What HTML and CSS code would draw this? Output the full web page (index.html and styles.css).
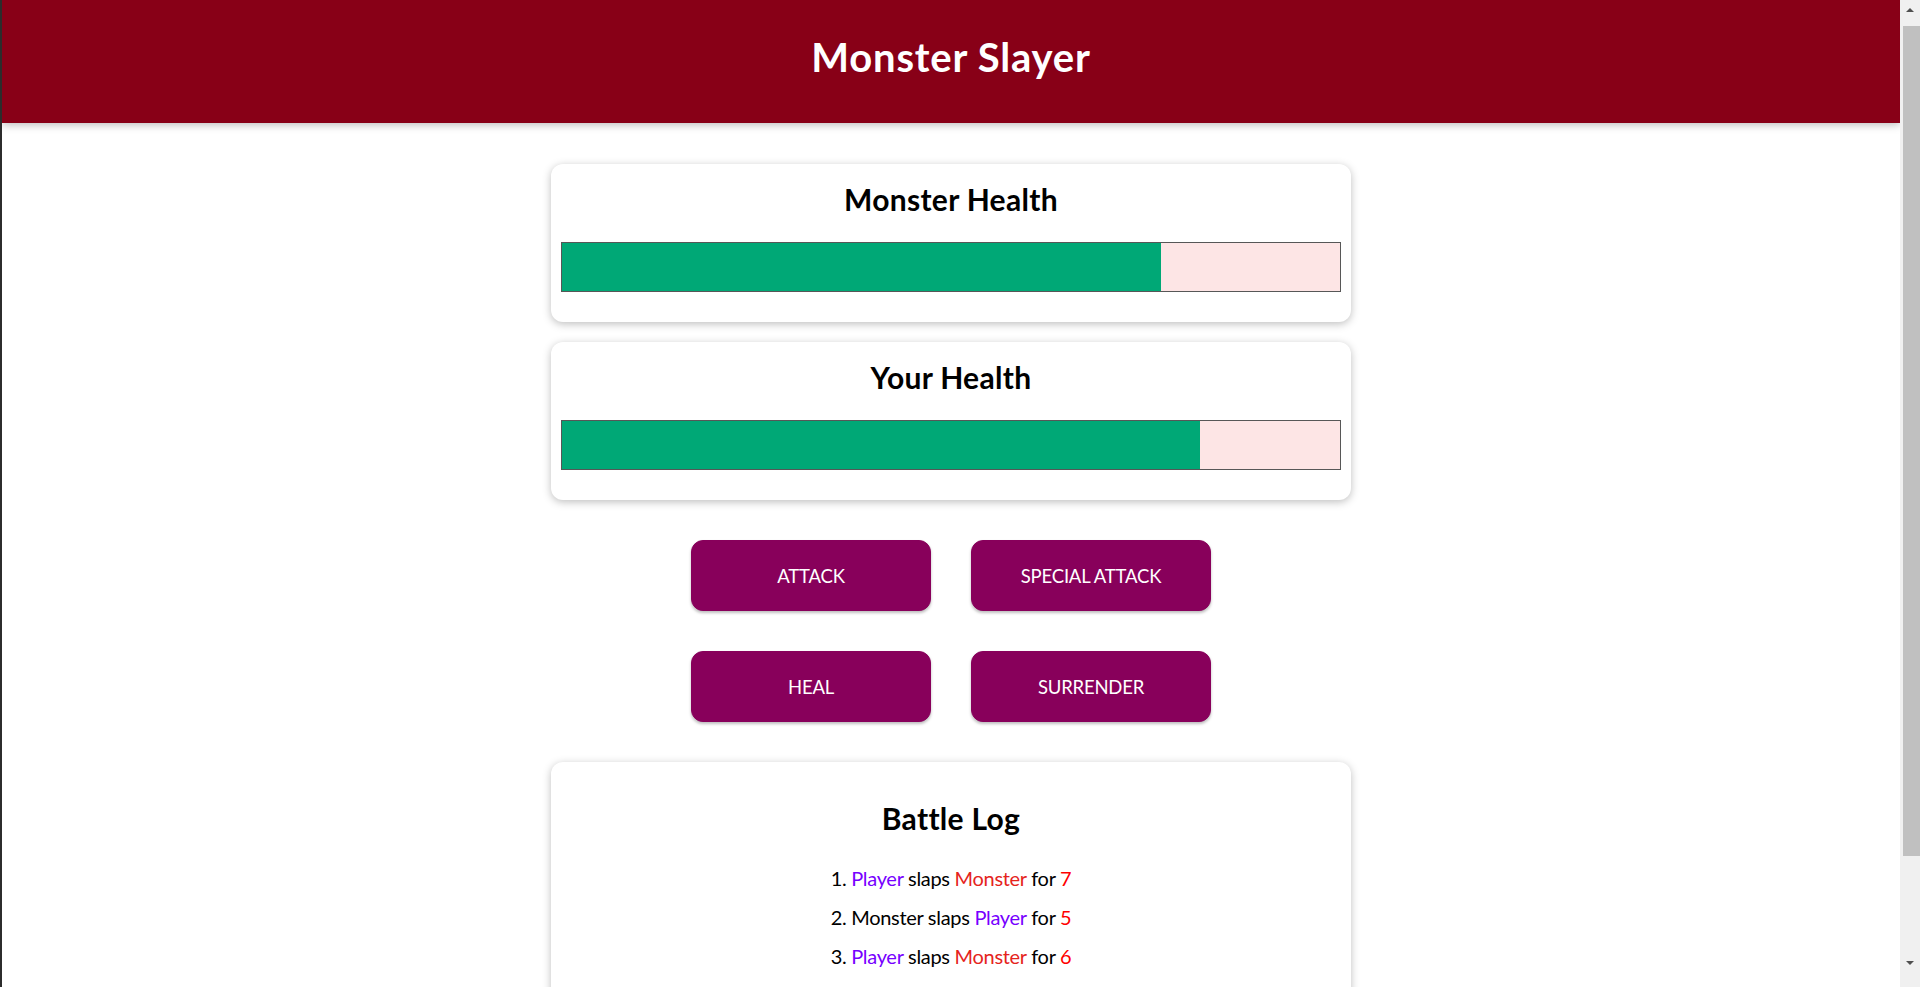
FILE: index.html
```html
<!DOCTYPE html>
<html lang="en">
<head>
<meta charset="utf-8">
<title>Monster Slayer</title>
<link rel="stylesheet" href="styles.css">
</head>
<body>
<header class="app-header">
  <h1 class="app-title">Monster Slayer</h1>
</header>
<main class="game">
  <section class="card health-card">
    <h2 class="card-title">Monster Health</h2>
    <div class="healthbar"><div class="healthbar-value" style="width: 77%"></div></div>
  </section>
  <section class="card health-card">
    <h2 class="card-title">Your Health</h2>
    <div class="healthbar"><div class="healthbar-value" style="width: 82%"></div></div>
  </section>
  <section class="controls">
    <button class="action">ATTACK</button>
    <button class="action">SPECIAL ATTACK</button>
    <button class="action">HEAL</button>
    <button class="action">SURRENDER</button>
  </section>
  <section class="card log-card">
    <h2 class="card-title">Battle Log</h2>
    <ol class="log-list">
      <li><span class="who-player">Player</span> slaps <span class="who-monster">Monster</span> for <span class="dmg">7</span></li>
      <li>Monster slaps <span class="who-player">Player</span> for <span class="dmg">5</span></li>
      <li><span class="who-player">Player</span> slaps <span class="who-monster">Monster</span> for <span class="dmg">6</span></li>
      <li>Monster slaps <span class="who-player">Player</span> for <span class="dmg">7</span></li>
      <li><span class="who-player">Player</span> slaps <span class="who-monster">Monster</span> for <span class="dmg">10</span></li>
      <li>Monster slaps <span class="who-player">Player</span> for <span class="dmg">6</span></li>
    </ol>
  </section>
</main>
<div class="fake-scrollbar" aria-hidden="true">
  <span class="sb-arrow sb-up"></span>
  <span class="sb-thumb"></span>
  <span class="sb-arrow sb-down"></span>
</div>
</body>
</html>
```
FILE: styles.css
```css
* { box-sizing: border-box; }

html {
  font-family: "Lato", "Noto Sans", sans-serif;
  font-size: 20px;
  color: #000;
  scrollbar-width: none;
}

html::-webkit-scrollbar { display: none; }

body {
  margin: 0;
  padding-right: 20px;
  border-left: 2px solid #2c2c2c;
  background: #fff;
}

.app-header {
  height: 123px;
  padding-top: 37px;
  background: #880017;
  color: #fff;
  text-align: center;
  box-shadow: 0 2px 8px rgba(0, 0, 0, 0.26);
}

.app-title {
  margin: 0;
  font-size: 40px;
  line-height: 40px;
  font-weight: 700;
  letter-spacing: 0.8px;
}

.game {
  display: flex;
  flex-direction: column;
  align-items: center;
  gap: 20px;
  padding: 41px 0 20px;
}

.card {
  width: 800px;
  background: #fff;
  border-radius: 12px;
  box-shadow: 0 2px 8px rgba(0, 0, 0, 0.26);
  text-align: center;
}

.health-card {
  padding: 20px 10px 30px;
}

.card-title {
  margin: 0;
  font-size: 30px;
  line-height: 30px;
  font-weight: 700;
  letter-spacing: 0.3px;
}

.healthbar {
  height: 50px;
  margin-top: 28px;
  border: 1px solid #575757;
  background: #fde5e5;
}

.healthbar-value {
  height: 100%;
  background: #00a876;
}

.controls {
  display: grid;
  grid-template-columns: 240px 240px;
  column-gap: 40px;
  row-gap: 40px;
  margin: 20px 0;
}

.action {
  height: 71px;
  font: inherit;
  font-size: 18.5px;
  letter-spacing: -0.2px;
  color: #fff;
  background: #88005b;
  border: 1px solid #88005b;
  border-radius: 12px;
  box-shadow: 0 2px 3px rgba(0, 0, 0, 0.26);
  cursor: pointer;
}

.log-card {
  padding: 41px 10px 20px;
}

.log-list {
  list-style: decimal inside;
  margin: 31px 0 0;
  padding: 0;
  display: flex;
  flex-direction: column;
  gap: 10px;
  font-size: 20px;
  line-height: 29px;
  letter-spacing: -0.3px;
}

.who-player { color: #7700ff; }
.who-monster { color: #e5231c; }
.dmg { color: #ff0000; }

/* window scrollbar drawn over the page edge */
.fake-scrollbar {
  position: fixed;
  top: 0;
  right: 0;
  width: 20px;
  height: 100vh;
  background: #f0f0f0;
  display: flex;
  flex-direction: column;
  align-items: center;
}

.sb-arrow {
  width: 0;
  height: 0;
  border-left: 4px solid transparent;
  border-right: 4px solid transparent;
}

.sb-up {
  margin-top: 8px;
  border-bottom: 4px solid #505050;
}

.sb-thumb {
  width: 17px;
  margin: 14px 0 0 3px;
  height: 830px;
  background: #c0c0c0;
}

.sb-down {
  margin-top: 105px;
  border-top: 4px solid #505050;
}
```
